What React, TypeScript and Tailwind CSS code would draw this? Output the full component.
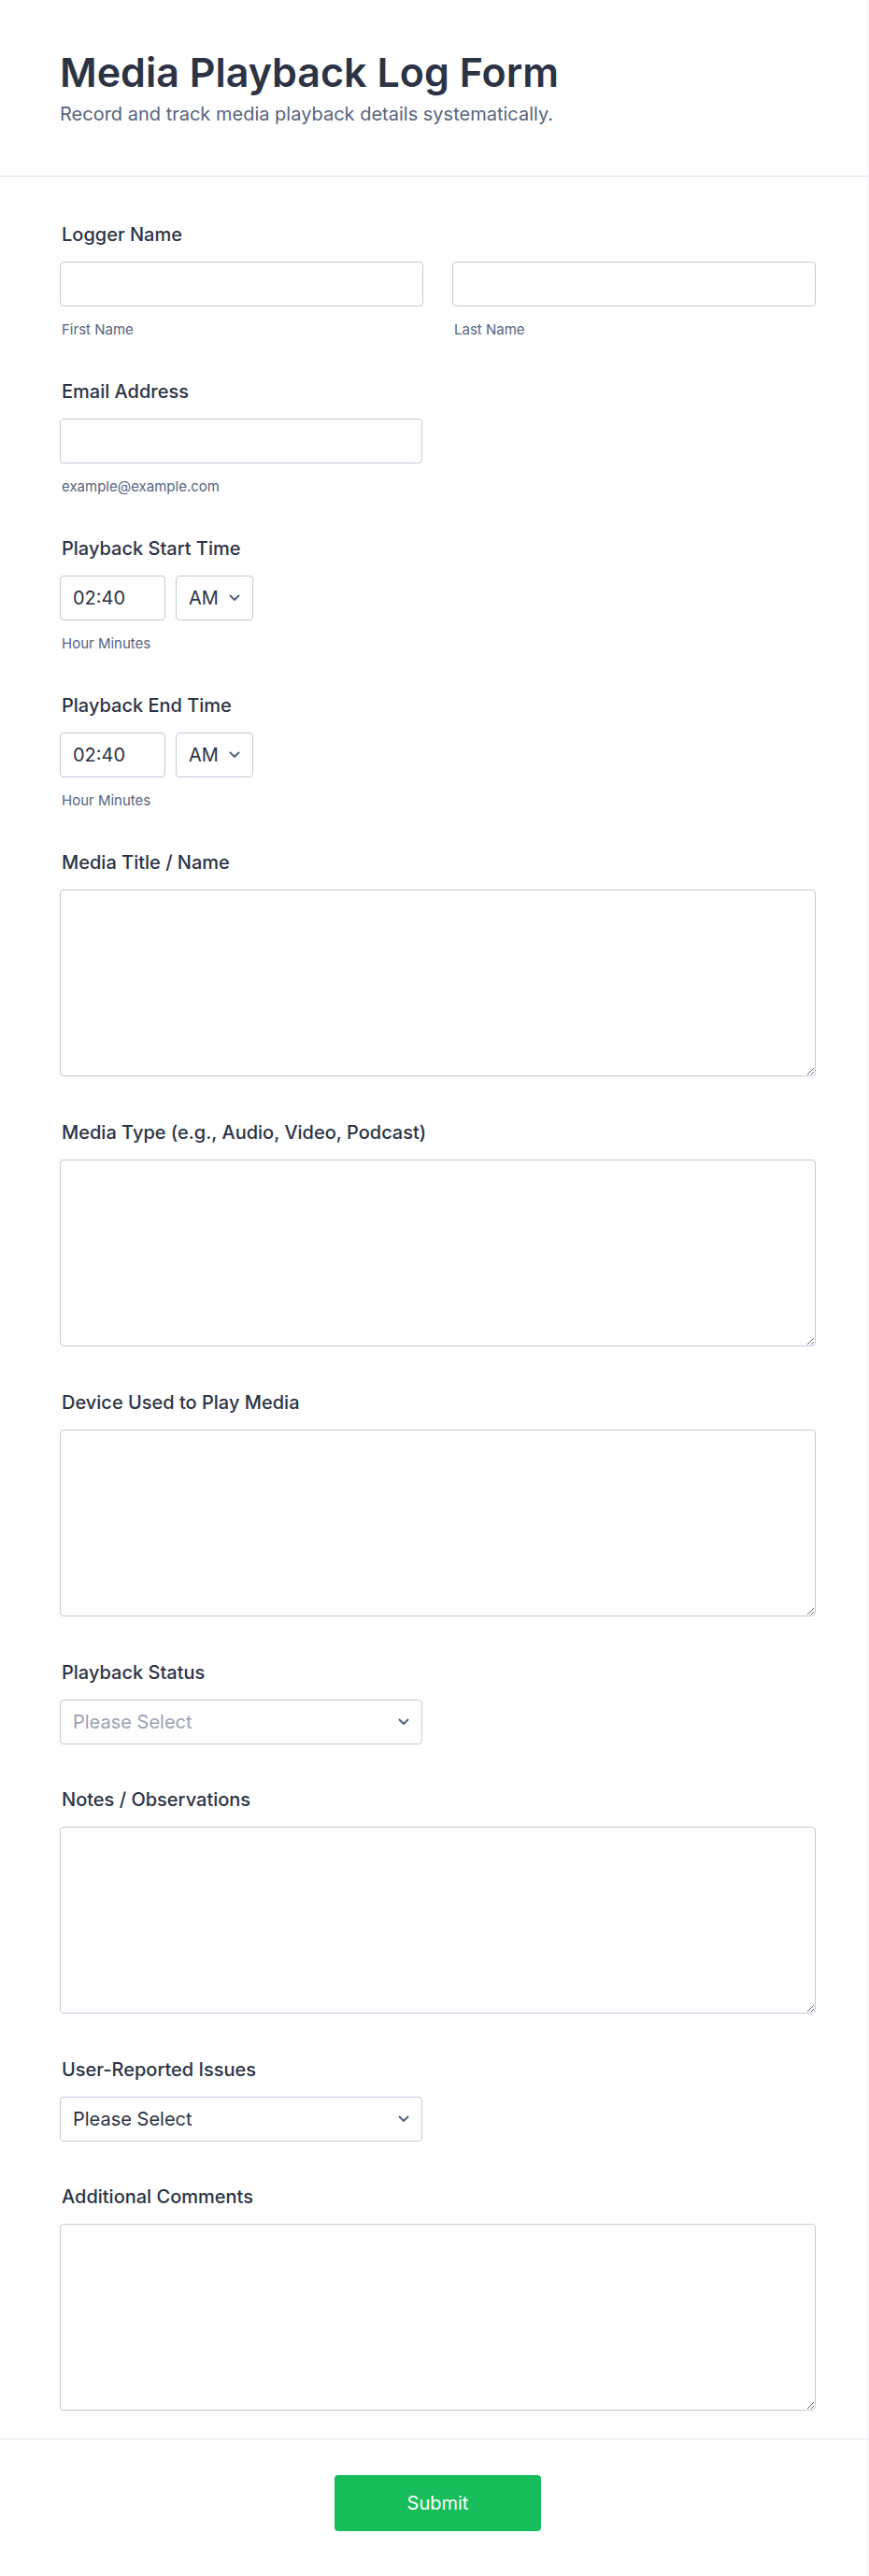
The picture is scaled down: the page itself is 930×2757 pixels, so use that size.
import React from 'react';

// 入力欄の下向き矢印
const Chevron: React.FC = () => (
  <svg
    width="12"
    height="8"
    viewBox="0 0 12 8"
    fill="none"
    className="pointer-events-none absolute right-[14px] top-1/2 -translate-y-1/2"
  >
    <path d="M1.5 1.5 6 6l4.5-4.5" stroke="#57647e" strokeWidth="2" strokeLinecap="round" strokeLinejoin="round" />
  </svg>
);

const Label: React.FC<{ children: React.ReactNode }> = ({ children }) => (
  <label className="block h-6 pl-[2px] text-[20px] leading-6 font-medium text-[#2c3345]">{children}</label>
);

const SubLabel: React.FC<{ children: React.ReactNode }> = ({ children }) => (
  <span className="mt-[15px] block h-5 pl-[2px] text-[15px] leading-5 text-[#57647e]">{children}</span>
);

const inputCls =
  'h-12 w-full rounded-[4px] border border-[#c3cad8] bg-white px-[13px] text-[20px] text-[#2c3345] outline-none';

const TextField: React.FC<{ label: string }> = ({ label }) => (
  <div className="pb-12">
    <Label>{label}</Label>
    <textarea className="mt-[17px] block h-[200px] w-full rounded-[4px] border border-[#c3cad8] bg-white px-[13px] py-3 text-[20px] text-[#2c3345] outline-none" />
  </div>
);

const SelectField: React.FC<{ label: string; muted?: boolean }> = ({ label, muted }) => (
  <div className="pb-[47px]">
    <Label>{label}</Label>
    <div className="relative mt-[17px] w-[388px]">
      <select
        defaultValue=""
        className={`${inputCls} appearance-none ${muted ? 'text-[#9aa3b5]' : 'text-[#2c3345]'}`}
      >
        <option value="">Please Select</option>
      </select>
      <Chevron />
    </div>
  </div>
);

const TimeField: React.FC<{ label: string }> = ({ label }) => (
  <div className="pb-11">
    <Label>{label}</Label>
    <div className="mt-[17px] flex gap-[11px]">
      <input readOnly defaultValue="02:40" className={`${inputCls} !w-[113px]`} />
      <div className="relative w-[83px]">
        <select defaultValue="AM" className={`${inputCls} appearance-none`}>
          <option>AM</option>
          <option>PM</option>
        </select>
        <Chevron />
      </div>
    </div>
    <SubLabel>Hour Minutes</SubLabel>
  </div>
);

const App: React.FC = () => {
  return (
    <div className="min-h-screen w-[930px] border-r border-[#eef0f4] bg-white font-['Inter','Noto_Sans',sans-serif]">
      {/* ヘッダー */}
      <header className="border-b border-[#dadde7] pl-16 pr-14 pt-[54px] pb-[52px]">
        <h1 className="text-[43px] leading-[46px] font-semibold text-[#2c3345]">Media Playback Log Form</h1>
        <p className="mt-[9px] text-[20px] leading-[27px] text-[#57647e]">
          Record and track media playback details systematically.
        </p>
      </header>

      {/* フォーム本体 */}
      <form className="pl-16 pr-14 pt-[50px] pb-[30px]">
        <div className="pb-11">
          <Label>Logger Name</Label>
          <div className="mt-[17px] grid grid-cols-2 gap-[31px]">
            <div>
              <input className={inputCls} />
              <SubLabel>First Name</SubLabel>
            </div>
            <div>
              <input className={inputCls} />
              <SubLabel>Last Name</SubLabel>
            </div>
          </div>
        </div>

        <div className="pb-11">
          <Label>Email Address</Label>
          <input type="email" className={`${inputCls} mt-[17px] !w-[388px]`} />
          <SubLabel>example@example.com</SubLabel>
        </div>

        <TimeField label="Playback Start Time" />
        <TimeField label="Playback End Time" />

        <TextField label="Media Title / Name" />
        <TextField label="Media Type (e.g., Audio, Video, Podcast)" />
        <TextField label="Device Used to Play Media" />

        <SelectField label="Playback Status" muted />
        <TextField label="Notes / Observations" />
        <SelectField label="User-Reported Issues" />

        <div>
          <Label>Additional Comments</Label>
          <textarea className="mt-[17px] block h-[200px] w-full rounded-[4px] border border-[#c3cad8] bg-white px-[13px] py-3 text-[20px] outline-none" />
        </div>
      </form>

      {/* 送信ボタン */}
      <footer className="flex justify-center border-t border-[#e9ebf0] pl-16 pr-14 pt-[38px] pb-[50px]">
        <button
          type="button"
          className="h-[60px] w-[221px] rounded-[4px] bg-[#18bd5b] text-[20px] font-normal text-white"
        >
          Submit
        </button>
      </footer>
    </div>
  );
};

export default App;
